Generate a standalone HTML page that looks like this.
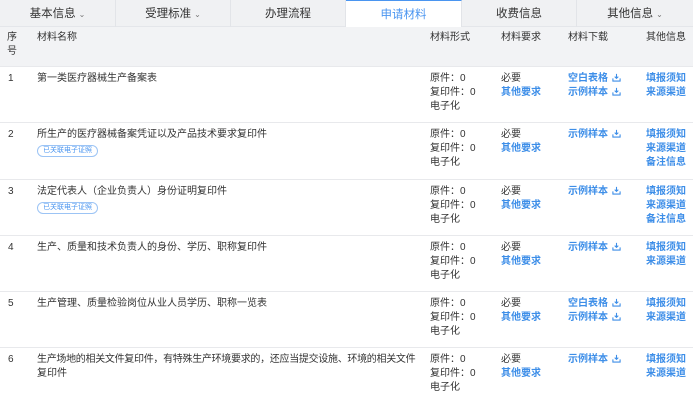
<!DOCTYPE html>
<html><head><meta charset="utf-8"><style>
*{margin:0;padding:0;box-sizing:border-box}
body{width:693px;height:403px;overflow:hidden;background:#fff;font-family:"Liberation Sans","Noto Sans CJK SC",sans-serif;font-size:10px;color:#333;position:relative}
.tabs{position:absolute;left:0;top:0;width:693px;height:27px;background:#f0f1f3;border-bottom:1px solid #e4e6ea}
.tab{position:absolute;top:0;height:27px;line-height:28px;text-align:center;font-size:11.5px;color:#333;border-right:1px solid #e2e4e8}
.tab.act{background:#fff;color:#4a95f0;border-top:1px solid #4a95f0;height:28px}
.car{font-size:8px;color:#777;margin-left:3px}
.head{position:absolute;left:0;top:27px;width:693px;height:39px;background:#f2f3f5}
.c{position:absolute;line-height:14px;white-space:nowrap}
.row{position:absolute;left:0;width:693px;border-top:1px solid #e8e9ec}
.b{color:#3d8ee8;font-weight:bold}
.tag{display:inline-block;border:1px solid #9cc4f5;color:#4a95f0;border-radius:8px;font-size:7px;line-height:10px;padding:0 5px;margin-top:3px;font-weight:normal}
.dl{display:inline-block;width:9px;height:9px;margin-left:4px;vertical-align:-1px}
</style></head><body>
<div class="tabs">
<div class="tab" style="left:0;width:116px">基本信息<span class="car">⌄</span></div>
<div class="tab" style="left:116px;width:115px">受理标准<span class="car">⌄</span></div>
<div class="tab" style="left:231px;width:115px">办理流程</div>
<div class="tab act" style="left:346px;width:116px">申请材料</div>
<div class="tab" style="left:462px;width:115px">收费信息</div>
<div class="tab" style="left:577px;width:116px;border-right:none">其他信息<span class="car">⌄</span></div>
</div>
<div class="head">
<div class="c" style="left:7px;top:4px">序<br>号</div>
<div class="c" style="left:37px;top:4px">材料名称</div>
<div class="c" style="left:430px;top:4px">材料形式</div>
<div class="c" style="left:501px;top:4px">材料要求</div>
<div class="c" style="left:568px;top:4px">材料下载</div>
<div class="c" style="left:646px;top:4px">其他信息</div>
</div>

<div class="row" style="top:66px;height:57px">
<div class="c" style="left:8px;top:5px">1</div>
<div class="c" style="left:37px;top:5px">第一类医疗器械生产备案表</div>
<div class="c" style="left:430px;top:5px">原件：0<br>复印件：0<br>电子化</div>
<div class="c" style="left:501px;top:5px">必要<br><span class="b">其他要求</span></div>
<div class="c b" style="left:568px;top:5px">空白表格<svg class="dl" viewBox="0 0 10 10"><path d="M5 1v5M3 4l2 2 2-2M1 6v3h8V6" fill="none" stroke="#3d8ee8" stroke-width="1.2"/></svg><br>示例样本<svg class="dl" viewBox="0 0 10 10"><path d="M5 1v5M3 4l2 2 2-2M1 6v3h8V6" fill="none" stroke="#3d8ee8" stroke-width="1.2"/></svg></div>
<div class="c b" style="left:646px;top:5px">填报须知<br>来源渠道</div>
</div>

<div class="row" style="top:122px;height:57px">
<div class="c" style="left:8px;top:5px">2</div>
<div class="c" style="left:37px;top:5px">所生产的医疗器械备案凭证以及产品技术要求复印件<br><span class="tag">已关联电子证照</span></div>
<div class="c" style="left:430px;top:5px">原件：0<br>复印件：0<br>电子化</div>
<div class="c" style="left:501px;top:5px">必要<br><span class="b">其他要求</span></div>
<div class="c b" style="left:568px;top:5px">示例样本<svg class="dl" viewBox="0 0 10 10"><path d="M5 1v5M3 4l2 2 2-2M1 6v3h8V6" fill="none" stroke="#3d8ee8" stroke-width="1.2"/></svg></div>
<div class="c b" style="left:646px;top:5px">填报须知<br>来源渠道<br>备注信息</div>
</div>

<div class="row" style="top:179px;height:57px">
<div class="c" style="left:8px;top:5px">3</div>
<div class="c" style="left:37px;top:5px">法定代表人（企业负责人）身份证明复印件<br><span class="tag">已关联电子证照</span></div>
<div class="c" style="left:430px;top:5px">原件：0<br>复印件：0<br>电子化</div>
<div class="c" style="left:501px;top:5px">必要<br><span class="b">其他要求</span></div>
<div class="c b" style="left:568px;top:5px">示例样本<svg class="dl" viewBox="0 0 10 10"><path d="M5 1v5M3 4l2 2 2-2M1 6v3h8V6" fill="none" stroke="#3d8ee8" stroke-width="1.2"/></svg></div>
<div class="c b" style="left:646px;top:5px">填报须知<br>来源渠道<br>备注信息</div>
</div>

<div class="row" style="top:235px;height:57px">
<div class="c" style="left:8px;top:5px">4</div>
<div class="c" style="left:37px;top:5px">生产、质量和技术负责人的身份、学历、职称复印件</div>
<div class="c" style="left:430px;top:5px">原件：0<br>复印件：0<br>电子化</div>
<div class="c" style="left:501px;top:5px">必要<br><span class="b">其他要求</span></div>
<div class="c b" style="left:568px;top:5px">示例样本<svg class="dl" viewBox="0 0 10 10"><path d="M5 1v5M3 4l2 2 2-2M1 6v3h8V6" fill="none" stroke="#3d8ee8" stroke-width="1.2"/></svg></div>
<div class="c b" style="left:646px;top:5px">填报须知<br>来源渠道</div>
</div>

<div class="row" style="top:291px;height:57px">
<div class="c" style="left:8px;top:5px">5</div>
<div class="c" style="left:37px;top:5px">生产管理、质量检验岗位从业人员学历、职称一览表</div>
<div class="c" style="left:430px;top:5px">原件：0<br>复印件：0<br>电子化</div>
<div class="c" style="left:501px;top:5px">必要<br><span class="b">其他要求</span></div>
<div class="c b" style="left:568px;top:5px">空白表格<svg class="dl" viewBox="0 0 10 10"><path d="M5 1v5M3 4l2 2 2-2M1 6v3h8V6" fill="none" stroke="#3d8ee8" stroke-width="1.2"/></svg><br>示例样本<svg class="dl" viewBox="0 0 10 10"><path d="M5 1v5M3 4l2 2 2-2M1 6v3h8V6" fill="none" stroke="#3d8ee8" stroke-width="1.2"/></svg></div>
<div class="c b" style="left:646px;top:5px">填报须知<br>来源渠道</div>
</div>

<div class="row" style="top:347px;height:60px">
<div class="c" style="left:8px;top:5px">6</div>
<div class="c" style="left:37px;top:5px"><span style="letter-spacing:-0.3px">生产场地的相关文件复印件，有特殊生产环境要求的，还应当提交设施、环境的相关文件</span><br>复印件</div>
<div class="c" style="left:430px;top:5px">原件：0<br>复印件：0<br>电子化</div>
<div class="c" style="left:501px;top:5px">必要<br><span class="b">其他要求</span></div>
<div class="c b" style="left:568px;top:5px">示例样本<svg class="dl" viewBox="0 0 10 10"><path d="M5 1v5M3 4l2 2 2-2M1 6v3h8V6" fill="none" stroke="#3d8ee8" stroke-width="1.2"/></svg></div>
<div class="c b" style="left:646px;top:5px">填报须知<br>来源渠道</div>
</div>
</body></html>
